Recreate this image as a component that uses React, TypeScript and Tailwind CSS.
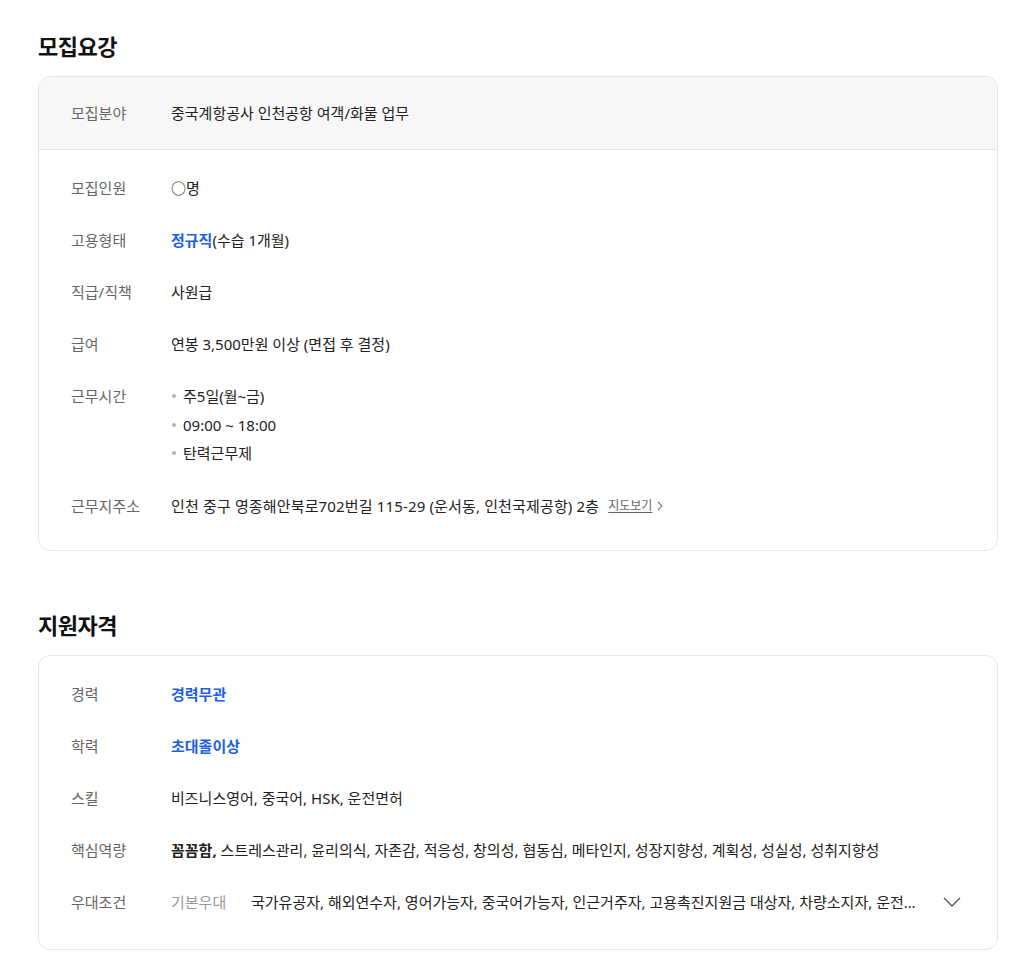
import React from "react";

const font = { fontFamily: '"Noto Sans", "Noto Sans CJK KR", sans-serif' };

function Row({ label, children }: { label: string; children: React.ReactNode }) {
  return (
    <div className="flex items-center leading-6">
      <div className="w-[100px] shrink-0 text-[#666] text-[15px]">{label}</div>
      <div className="flex-1 min-w-0 text-[#222] text-[15px]">{children}</div>
    </div>
  );
}

function Bullet({ children }: { children: React.ReactNode }) {
  return (
    <li className="flex items-center h-[28.5px]">
      <span className="w-[4px] h-[4px] rounded-full bg-[#b5b5b5] mr-[7px] ml-[1px]" />
      <span>{children}</span>
    </li>
  );
}

export default function App() {
  return (
    <div className="bg-white min-h-[971px] pt-[32px] pl-[38px]" style={font}>
      <div className="w-[960px]">
        <h2 className="text-[22px] font-bold leading-[28px] text-[#111] tracking-[-0.5px]">모집요강</h2>
        <div className="mt-[16px] border border-[#e6e6e6] rounded-[12px] overflow-hidden">
          <div className="bg-[#f7f7f7] border-b border-[#e6e6e6] px-[32px] py-[24px]">
            <Row label="모집분야">중국계항공사 인천공항 여객/화물 업무</Row>
          </div>
          <div className="px-[32px] pt-[26px] pb-[32px] flex flex-col gap-[28px]">
            <Row label="모집인원">○명</Row>
            <Row label="고용형태">
              <span className="font-bold text-[#1c5fe3]">정규직</span>(수습 1개월)
            </Row>
            <Row label="직급/직책">사원급</Row>
            <Row label="급여">연봉 3,500만원 이상 (면접 후 결정)</Row>
            <div className="flex items-start -mt-[2px] -mb-[2px]">
              <div className="w-[100px] shrink-0 text-[#666] text-[15px] leading-[28px]">근무시간</div>
              <ul className="text-[#222] text-[15px] leading-[28px]">
                <Bullet>주5일(월~금)</Bullet>
                <Bullet>09:00 ~ 18:00</Bullet>
                <Bullet>탄력근무제</Bullet>
              </ul>
            </div>
            <Row label="근무지주소">
              <span className="inline-flex items-center">
                <span className="tracking-[0.15px]">인천 중구 영종해안북로702번길 115-29 (운서동, 인천국제공항) 2층</span>
                <span className="ml-[9px] text-[12px] text-[#666] underline underline-offset-2">지도보기</span>
                <svg width="10" height="12" viewBox="0 0 10 12" className="ml-[3px]">
                  <path d="M3 2 L7 6 L3 10" fill="none" stroke="#777" strokeWidth="1.1" />
                </svg>
              </span>
            </Row>
          </div>
        </div>

        <h2 className="mt-[60px] text-[22px] font-bold leading-[28px] text-[#111] tracking-[-0.5px]">지원자격</h2>
        <div className="mt-[16px] border border-[#e6e6e6] rounded-[12px] px-[32px] pt-[26px] pb-[35px] flex flex-col gap-[28px]">
          <Row label="경력">
            <span className="font-bold text-[#1c5fe3]">경력무관</span>
          </Row>
          <Row label="학력">
            <span className="font-bold text-[#1c5fe3]">초대졸이상</span>
          </Row>
          <Row label="스킬">비즈니스영어, 중국어, HSK, 운전면허</Row>
          <Row label="핵심역량">
            <span className="font-bold">꼼꼼함,</span> 스트레스관리, 윤리의식, 자존감, 적응성, 창의성, 협동심, 메타인지, 성장지향성, 계획성, 성실성, 성취지향성
          </Row>
          <Row label="우대조건">
            <div className="flex items-center">
              <span className="w-[80px] shrink-0 text-[#999]">기본우대</span>
              <span className="flex-1 min-w-0 truncate">
                국가유공자, 해외연수자, 영어가능자, 중국어가능자, 인근거주자, 고용촉진지원금 대상자, 차량소지자, 운전면허 소지자, 장애인
              </span>
              <svg width="20" height="12" viewBox="0 0 20 12" className="ml-[24px] mr-[3px] shrink-0">
                <path d="M2 2 L10 10 L18 2" fill="none" stroke="#555" strokeWidth="1.3" />
              </svg>
            </div>
          </Row>
        </div>
      </div>
    </div>
  );
}
